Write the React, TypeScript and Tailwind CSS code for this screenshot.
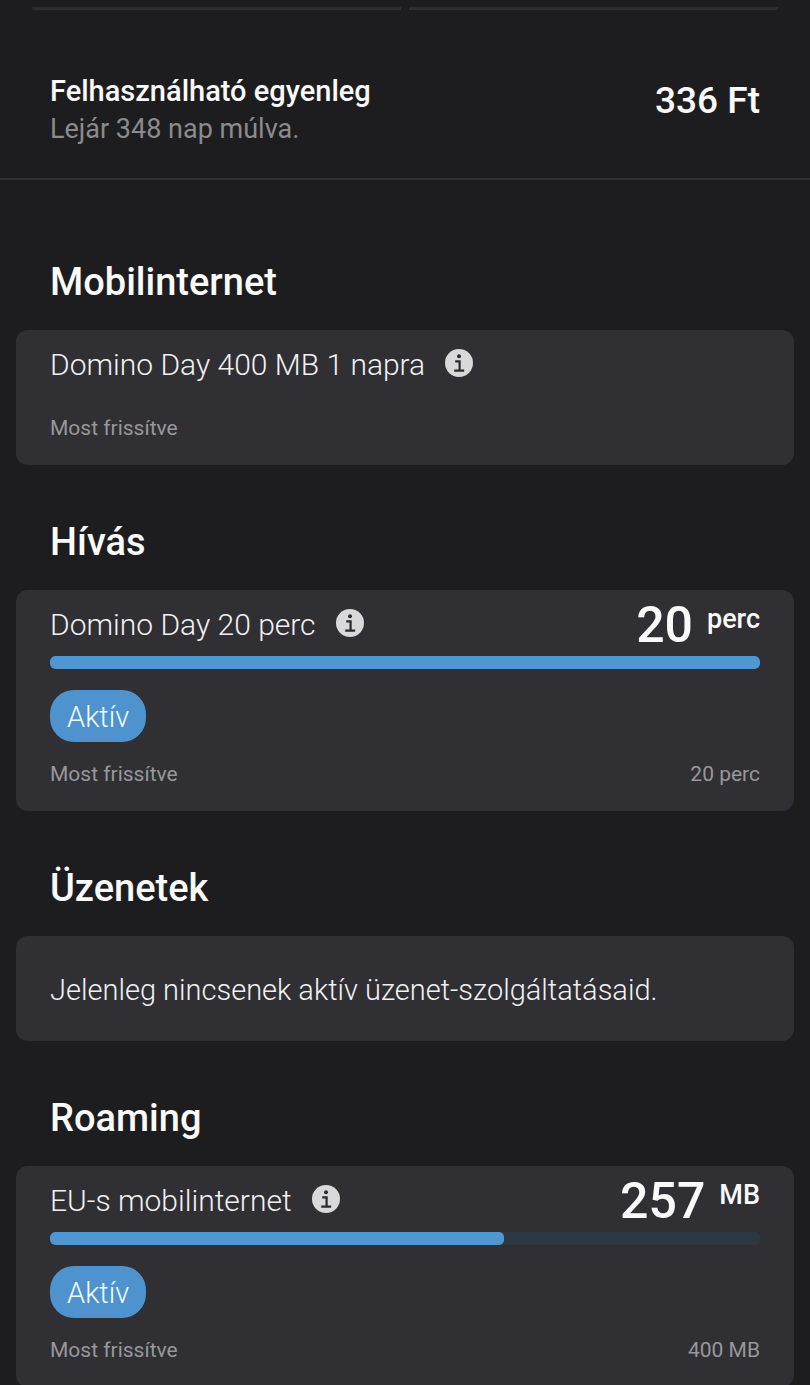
type Quota = {
  name: string
  updated: string
  amount?: string
  unit?: string
  total?: string
  percent?: number
  status?: string
}

type Group = {
  title: string
  quota?: Quota
  empty?: string
}

const groups: Group[] = [
  {
    title: 'Mobilinternet',
    quota: { name: 'Domino Day 400 MB 1 napra', updated: 'Most frissítve' },
  },
  {
    title: 'Hívás',
    quota: {
      name: 'Domino Day 20 perc',
      updated: 'Most frissítve',
      amount: '20',
      unit: 'perc',
      total: '20 perc',
      percent: 100,
      status: 'Aktív',
    },
  },
  {
    title: 'Üzenetek',
    empty: 'Jelenleg nincsenek aktív üzenet-szolgáltatásaid.',
  },
  {
    title: 'Roaming',
    quota: {
      name: 'EU-s mobilinternet',
      updated: 'Most frissítve',
      amount: '257',
      unit: 'MB',
      total: '400 MB',
      percent: 64,
      status: 'Aktív',
    },
  },
]

const InfoIcon = () => (
  <svg viewBox="0 0 28 28" className="size-7" aria-hidden="true">
    <circle cx="14" cy="14" r="14" fill="#d9d9da" />
    <circle cx="14" cy="7.2" r="2" fill="#2b2a2f" />
    <path d="M10.2 12.4H14.6V21.6M9.2 21.6H19.2" fill="none" stroke="#2b2a2f" strokeWidth="2.2" />
  </svg>
)

const QuotaCard = ({ quota }: { quota: Quota }) => {
  const active = quota.percent !== undefined

  return (
    <div className="rounded-xl bg-[#302f34] px-[34px] pb-[23px]">
      <div className="flex h-[66px] items-center justify-between">
        <div className="flex items-center gap-5">
          <h3 className="pt-1 text-[30px] leading-9 font-light text-[#f1f1f2]">{quota.name}</h3>
          <button type="button" aria-label={`${quota.name} részletei`}>
            <InfoIcon />
          </button>
        </div>
        {active && (
          <p className="flex items-start gap-[14px] pt-1 font-medium text-[#fafafa]">
            <span className="text-[50px] leading-[60px]">{quota.amount}</span>
            <span className="pt-1 text-[27px] leading-10">{quota.unit}</span>
          </p>
        )}
      </div>
      {active && (
        <>
          <div
            role="progressbar"
            aria-label={quota.name}
            aria-valuenow={quota.percent}
            aria-valuemin={0}
            aria-valuemax={100}
            className="h-[13px] overflow-hidden rounded-[5px] bg-[#2c3844]"
          >
            <div className="h-full rounded-[5px] bg-[#5096d0]" style={{ width: `${quota.percent}%` }} />
          </div>
          <span className="mt-[21px] flex h-[52px] w-fit items-center rounded-3xl bg-[#4f93ce] px-[17px] pt-1 text-[29px] font-light text-[#f1fbff]">
            {quota.status}
          </span>
        </>
      )}
      <div className="mt-[18px] flex justify-between text-[21px] leading-7 text-[#98979b]">
        <span>{quota.updated}</span>
        {quota.total && <span>{quota.total}</span>}
      </div>
    </div>
  )
}

export default function App() {
  return (
    <div className="min-h-screen bg-[#1d1d1f] font-[Roboto,sans-serif] text-[#fafafa]">
      <header className="border-b-2 border-[#2f2f31]">
        <div className="flex gap-2 px-8 pt-[7px]">
          <div className="h-[3px] flex-1 rounded-bl-full bg-[#2e2e30]" />
          <div className="h-[3px] flex-1 rounded-br-full bg-[#2e2e30]" />
        </div>
        <div className="flex items-start justify-between px-[50px] pt-[61px] pb-[31px]">
          <div>
            <h1 className="text-[29px] leading-10 font-medium">Felhasználható egyenleg</h1>
            <p className="text-[27px] leading-9 text-[#8b8b8d]">Lejár 348 nap múlva.</p>
          </div>
          <p className="pt-[5px] text-[37px] leading-[50px] font-medium">336 Ft</p>
        </div>
      </header>
      <main className="px-4 pt-[25px]">
        {groups.map((group) => (
          <section key={group.title}>
            <h2 className="px-[34px] pt-[52px] pb-[23px] text-[38px] leading-[50px] font-medium">{group.title}</h2>
            {group.quota && <QuotaCard quota={group.quota} />}
            {group.empty && (
              <p className="rounded-xl bg-[#302f34] px-[34px] pt-9 pb-[33px] text-[29px] leading-9 font-light text-[#f1f1f2]">
                {group.empty}
              </p>
            )}
          </section>
        ))}
      </main>
    </div>
  )
}
